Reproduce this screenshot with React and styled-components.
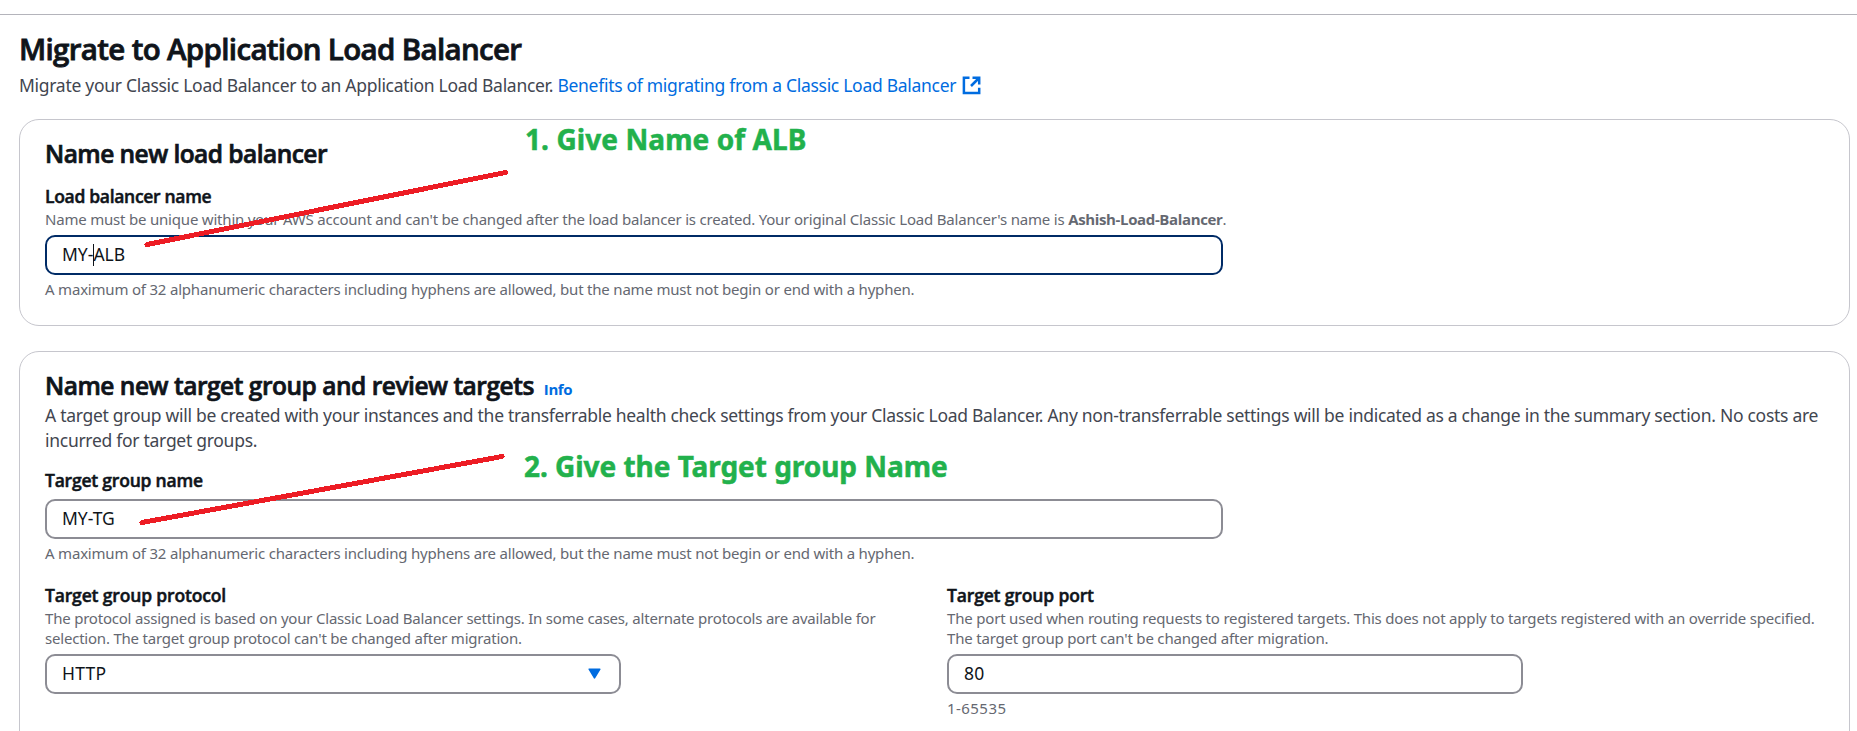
import React from "react";
import styled, { createGlobalStyle } from "styled-components";

const Global = createGlobalStyle`
  *, *::before, *::after { box-sizing: border-box; }
  body {
    margin: 0;
    background: #ffffff;
    color: #0f141a;
    font-family: "Noto Sans", "Open Sans", sans-serif;
    font-size: 17.5px;
    overflow: hidden;
  }
`;

const Page = styled.div`
  position: relative;
  height: 731px;
  overflow: hidden;
  padding-top: 14px;
`;

const Main = styled.main`
  display: flex;
  flex-direction: column;
  border-top: 1px solid #b4b4bb;
  padding: 16px 7px 0 19px;
`;

const Title = styled.h1`
  margin: 0 0 6px;
  font: 600 29.5px/36px "Open Sans", sans-serif;
  letter-spacing: -0.66px;
  -webkit-text-stroke: 0.8px #0f141a;
`;

const Intro = styled.p`
  display: flex;
  align-items: center;
  margin: 0 0 21px;
  line-height: 25px;
  letter-spacing: -0.29px;
  color: #424650;
  white-space: pre;
`;

const Link = styled.a`
  display: inline-flex;
  align-items: center;
  gap: 6px;
  color: #006ce0;
`;

const Card = styled.section`
  display: flex;
  flex-direction: column;
  height: ${(p) => p.$height}px;
  border: 1px solid #c6c6cd;
  border-radius: 20px;
  padding: 19px 24px 0 25px;
  margin-bottom: 25px;
`;

const CardHead = styled.div`
  display: flex;
  align-items: baseline;
  gap: 10px;
  height: 30px;
`;

const Heading = styled.h2`
  margin: 0;
  font: 600 24.5px/30px "Open Sans", sans-serif;
  letter-spacing: ${(p) => p.$track}px;
  -webkit-text-stroke: 0.7px #0f141a;
`;

const Info = styled.a`
  font: 700 15px/20px "Open Sans", sans-serif;
  letter-spacing: -0.4px;
  color: #006ce0;
`;

const Summary = styled.p`
  margin: 2px 0 0;
  line-height: 25px;
  letter-spacing: -0.283px;
  color: #424650;
`;

const Field = styled.div`
  display: flex;
  flex-direction: column;
  margin-top: ${(p) => p.$top || 0}px;
`;

const Label = styled.label`
  font: 600 17.5px/25px "Open Sans", sans-serif;
  letter-spacing: ${(p) => p.$track || -0.31}px;
  -webkit-text-stroke: 0.5px #0f141a;
`;

const Description = styled.div`
  font-size: 15px;
  line-height: 20px;
  letter-spacing: ${(p) => p.$track || -0.2}px;
  color: #656871;
  white-space: nowrap;

  b { font-family: "Open Sans", sans-serif; letter-spacing: -0.36px; }
`;

const Hint = styled(Description)`
  margin-top: 4px;
`;

const Control = styled.div`
  display: flex;
  align-items: center;
  justify-content: space-between;
  width: ${(p) => p.$width}px;
  height: 40px;
  margin-top: 6px;
  padding: 0 18px 2px 15px;
  border: 2px solid ${(p) => (p.$focused ? "#002b66" : "#8c8c94")};
  border-radius: 10px;
  letter-spacing: ${(p) => p.$track || 0}px;
`;

const Caret = styled.span`
  display: inline-block;
  width: 1px;
  height: 22px;
  margin-right: -1px;
  background: #0f141a;
  vertical-align: -5px;
`;

const Columns = styled.div`
  display: grid;
  grid-template-columns: 902px 1fr;
  margin-top: 20px;
`;

const Strokes = styled.svg`
  position: absolute;
  inset: 0;
  pointer-events: none;
`;

const Note = styled.div`
  position: absolute;
  left: ${(p) => p.$x}px;
  top: ${(p) => p.$y}px;
  font: 700 28px/28px "Noto Sans", sans-serif;
  letter-spacing: ${(p) => p.$track || 0}px;
  color: #22b14c;
  -webkit-text-stroke: 0.5px #22b14c;
  white-space: nowrap;
`;

const ExternalIcon = () => (
  <svg width="19" height="19" viewBox="0 0 19 19" fill="none" stroke="#006ce0" strokeWidth="2.5">
    <path d="M7.500 1.800H1.900v15.300h15.300v-5.400M10.500 1.800h6.700v6.700M17 2L9 10" />
  </svg>
);

const Triangle = () => (
  <svg width="13" height="12" viewBox="0 0 13 12">
    <path d="M1.200 2.200h10.600L6.500 10.800z" fill="#006ce0" stroke="#006ce0" strokeWidth="1.6" strokeLinejoin="round" />
  </svg>
);

const nameHint =
  "A maximum of 32 alphanumeric characters including hyphens are allowed, but the name must not begin or end with a hyphen.";

export default function App() {
  return (
    <Page>
      <Global />
      <Main>
        <Title>Migrate to Application Load Balancer</Title>
        <Intro>
          {"Migrate your Classic Load Balancer to an Application Load Balancer. "}
          <Link>
            Benefits of migrating from a Classic Load Balancer
            <ExternalIcon />
          </Link>
        </Intro>

        <Card $height={207}>
          <CardHead>
            <Heading $track={-0.54}>Name new load balancer</Heading>
          </CardHead>
          <Field $top={15}>
            <Label>Load balancer name</Label>
            <Description>
              Name must be unique within your AWS account and can't be changed after the load balancer is created. Your
              original Classic Load Balancer's name is <b>Ashish-Load-Balancer</b>.
            </Description>
            <Control $width={1178} $focused>
              <span>MY-<Caret />ALB</span>
            </Control>
            <Hint>{nameHint}</Hint>
          </Field>
        </Card>

        <Card $height={420}>
          <CardHead>
            <Heading $track={-0.48}>Name new target group and review targets</Heading>
            <Info>Info</Info>
          </CardHead>
          <Summary>
            A target group will be created with your instances and the transferrable health check settings from your
            Classic Load Balancer. Any non-transferrable settings will be indicated as a change in the summary section.
            No costs are incurred for target groups.
          </Summary>
          <Field $top={15}>
            <Label $track={-0.21}>Target group name</Label>
            <Control $width={1178}>MY-TG</Control>
            <Hint>{nameHint}</Hint>
          </Field>
          <Columns>
            <Field>
              <Label $track={-0.16}>Target group protocol</Label>
              <Description $track={-0.21}>
                The protocol assigned is based on your Classic Load Balancer settings. In some cases, alternate protocols are available for
                <br />
                selection. The target group protocol can't be changed after migration.
              </Description>
              <Control $width={576} $track={0.25}>
                HTTP
                <Triangle />
              </Control>
            </Field>
            <Field>
              <Label $track={-0.15}>Target group port</Label>
              <Description $track={-0.19}>
                The port used when routing requests to registered targets. This does not apply to targets registered with an override specified.
                <br />
                The target group port can't be changed after migration.
              </Description>
              <Control $width={576} $track={0.3}>80</Control>
              <Hint $track={0.45}>1-65535</Hint>
            </Field>
          </Columns>
        </Card>
      </Main>

      <Strokes width="1857" height="731" stroke="#ed1c24" strokeWidth="5" strokeLinecap="round" shapeRendering="crispEdges">
        <path d="M147 244.5L505.500 172.500" />
        <path d="M142 522.500L502 456.500" />
      </Strokes>
      <Note $x={525} $y={125} $track={0.08}>1. Give Name of ALB</Note>
      <Note $x={524} $y={452} $track={-0.04}>2. Give the Target group Name</Note>
    </Page>
  );
}
